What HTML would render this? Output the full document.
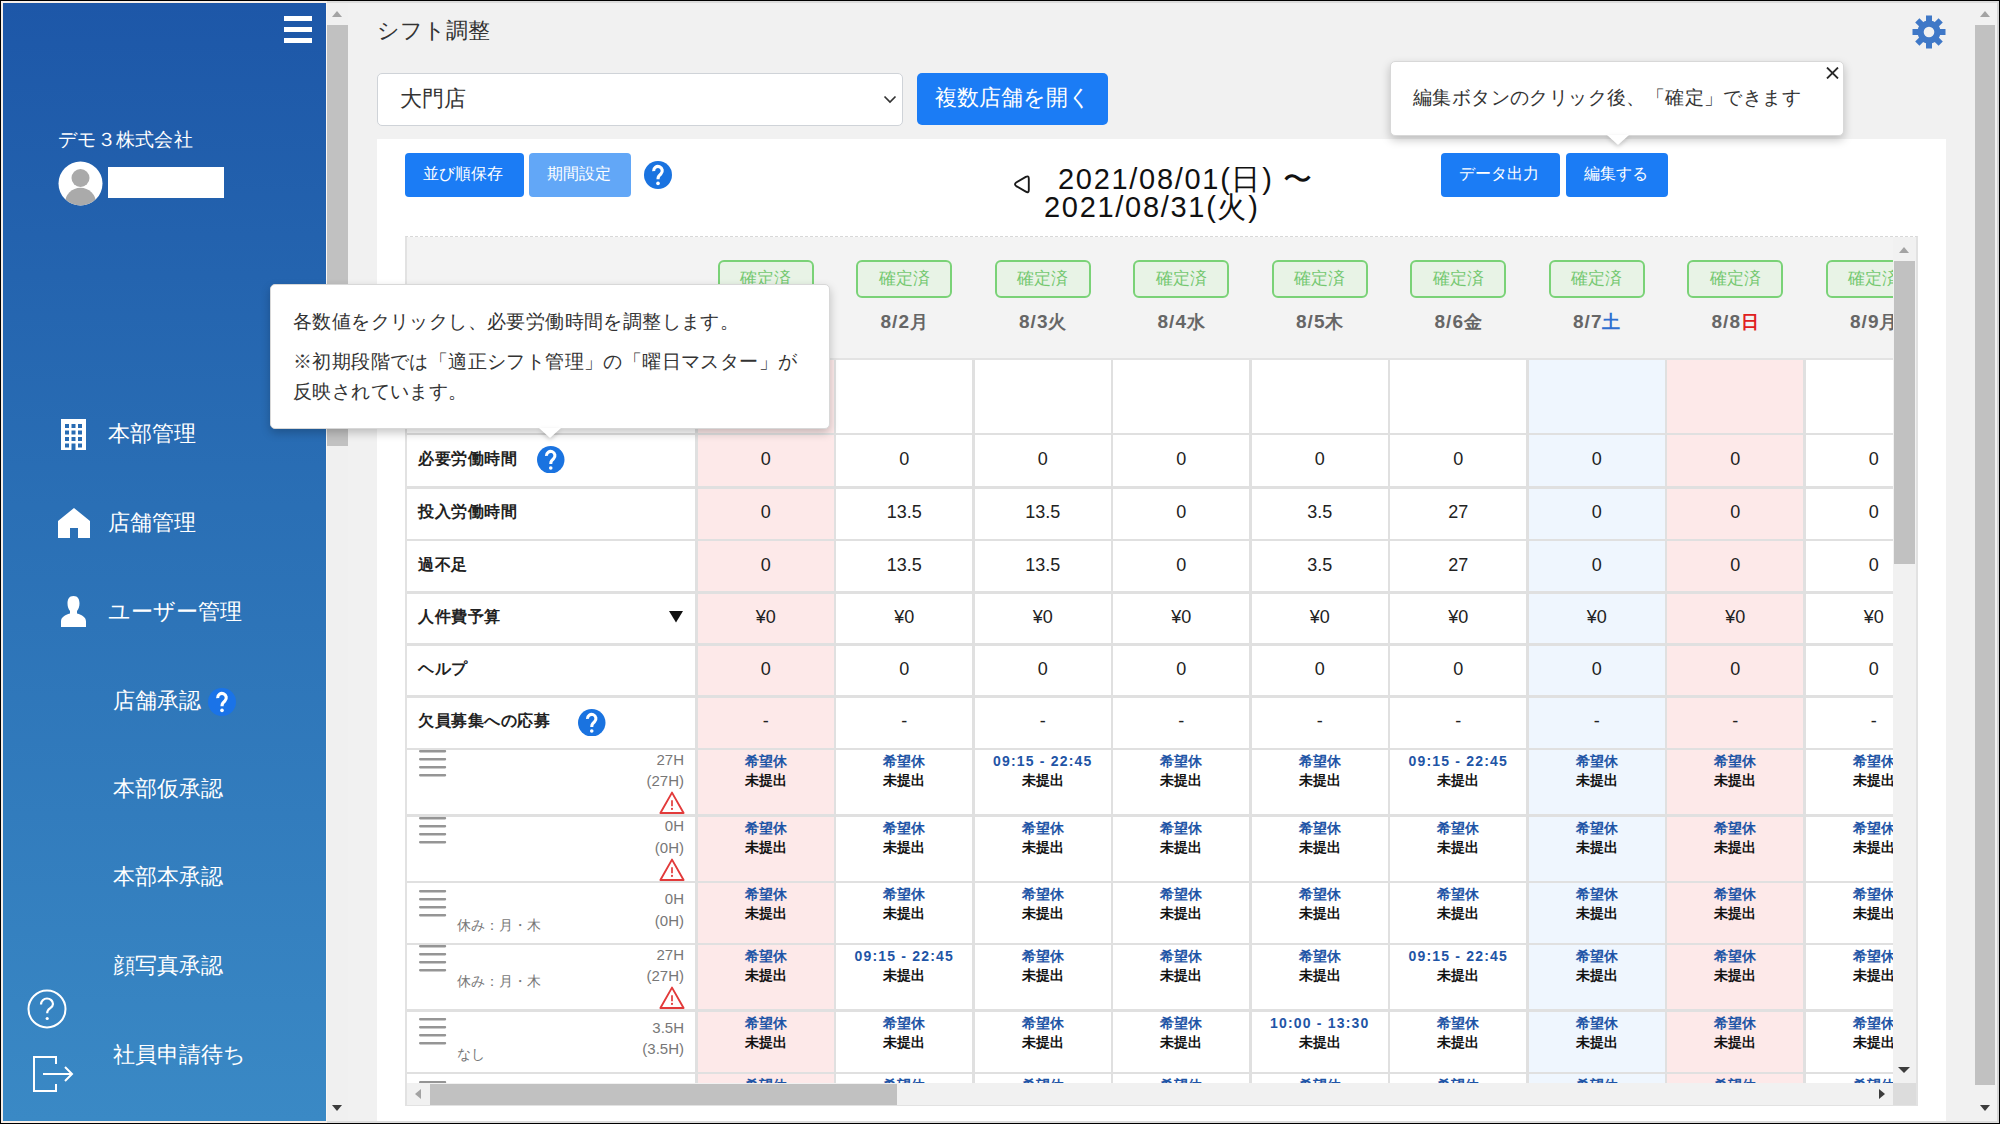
<!DOCTYPE html>
<html><head><meta charset="utf-8"><title>シフト調整</title>
<style>
*{box-sizing:border-box;margin:0;padding:0}
html,body{width:2000px;height:1124px;overflow:hidden}
body{position:relative;background:#000;font-family:"Liberation Sans",sans-serif;color:#222}
.ab{position:absolute}
.t{position:absolute;white-space:nowrap;line-height:1}
</style></head><body>

<div class="ab" style="left:1px;top:1px;width:1998px;height:1122px;background:#f1f1f1;border-top:2px solid #dcdcdc;border-left:2px solid #f6efe9;border-right:2px solid #d6d6d6;border-bottom:2px solid #dcdcdc"></div>
<div class="ab" style="left:1px;top:1px;width:326px;height:2px;background:#f6efe9"></div>
<div class="ab" style="left:1px;top:1121px;width:326px;height:2px;background:#f8efe8"></div>
<div class="ab" style="left:3px;top:3px;width:323px;height:1118px;background:linear-gradient(180deg,#1d57a8 0%,#2a6fb5 45%,#3a89c5 100%)"></div>
<div class="ab" style="left:284px;top:16px;width:28px;height:5px;background:#fff"></div>
<div class="ab" style="left:284px;top:27px;width:28px;height:5px;background:#fff"></div>
<div class="ab" style="left:284px;top:38px;width:28px;height:5px;background:#fff"></div>
<div class="t" style="left:58px;top:130px;font-size:19px;letter-spacing:0.3px;color:#fff">デモ３株式会社</div>
<svg class="ab" style="left:58px;top:161px" width="45" height="45" viewBox="0 0 45 45">
<circle cx="22.5" cy="22.5" r="22" fill="#fff"/>
<clipPath id="avc"><circle cx="22.5" cy="22.5" r="22"/></clipPath>
<g clip-path="url(#avc)" fill="#aaa"><circle cx="22.5" cy="17" r="9"/><ellipse cx="22.5" cy="42.3" rx="15.5" ry="15.5"/></g>
</svg>
<div class="ab" style="left:108px;top:167px;width:116px;height:31px;background:#fff"></div>
<svg class="ab" style="left:61px;top:419px" width="25" height="31" viewBox="0 0 25 31"><path fill="#fff" fill-rule="evenodd" d="M0 0H25V31H0Z M4 5h4v4h-4z M10.5 5h4v4h-4z M17 5h4v4h-4z M4 11.5h4v4h-4z M10.5 11.5h4v4h-4z M17 11.5h4v4h-4z M4 18h4v4h-4z M10.5 18h4v4h-4z M17 18h4v4h-4z M4 24.5h4v4h-4z M17 24.5h4v4h-4z M10.5 24.5h4v6.5h-4z"/></svg>
<div class="t" style="left:108px;top:423px;font-size:22px;color:#fff">本部管理</div>
<svg class="ab" style="left:58px;top:508px" width="32" height="30" viewBox="0 0 32 30"><path fill="#fff" d="M16 0L32 13V30H20V20H12V30H0V13Z"/></svg>
<div class="t" style="left:108px;top:512px;font-size:22px;color:#fff">店舗管理</div>
<svg class="ab" style="left:61px;top:596px" width="25" height="31" viewBox="0 0 25 31"><path fill="#fff" d="M12.5 0C8 0 6.5 3.5 6.5 7.5c0 3 1 5.5 2.5 7.5v2.5C4 19 0 21 0 25.5V31h25v-5.5c0-4.5-4-6.5-9-8V15c1.5-2 2.5-4.5 2.5-7.5C18.5 3.5 17 0 12.5 0z"/></svg>
<div class="t" style="left:108px;top:601px;font-size:22px;color:#fff">ユーザー管理</div>
<div class="t" style="left:113px;top:690px;font-size:22px;color:#fff">店舗承認</div>
<div class="t" style="left:113px;top:778px;font-size:22px;color:#fff">本部仮承認</div>
<div class="t" style="left:113px;top:866px;font-size:22px;color:#fff">本部本承認</div>
<div class="t" style="left:113px;top:955px;font-size:22px;color:#fff">顔写真承認</div>
<div class="t" style="left:113px;top:1044px;font-size:22px;color:#fff">社員申請待ち</div>
<svg class="ab" style="left:208px;top:688px" width="28" height="28" viewBox="0 0 27.6 27.6"><circle cx="13.8" cy="13.8" r="13.8" fill="#1a73e8"/><path d="M9.5 9.9A4.25 4.25 0 1 1 16.7 12.7L14.7 14.8Q13.8 15.9 13.8 18" fill="none" stroke="#fff" stroke-width="3.1"/><circle cx="13.8" cy="22.1" r="1.8" fill="#fff"/></svg>
<svg class="ab" style="left:27px;top:989px" width="40" height="40" viewBox="0 0 40 40"><circle cx="20" cy="20" r="18.5" fill="none" stroke="#fff" stroke-width="2"/><path d="M14 15.5c0-3.5 2.7-6 6-6s6 2.5 6 5.5c0 3.3-3.5 4.3-5 6.3-.6.8-.8 1.7-.8 3" fill="none" stroke="#fff" stroke-width="2.2"/><circle cx="20.2" cy="29.5" r="1.6" fill="#fff"/></svg>
<svg class="ab" style="left:33px;top:1056px" width="41" height="36" viewBox="0 0 41 36"><path d="M23 8V1H1V35H23V28" fill="none" stroke="#fff" stroke-width="2"/><path d="M10 18H39M32 11L39 18L32 25" fill="none" stroke="#fff" stroke-width="2"/></svg>
<div class="ab" style="left:326px;top:3px;width:22px;height:1118px;background:#f0f0f0;border-left:1px solid #fbf7f3"></div>
<div class="ab" style="left:327px;top:25px;width:21px;height:421px;background:#c1c1c1"></div>
<div class="ab" style="left:332px;top:11px;width:0;height:0;border-left:5.5px solid transparent;border-right:5.5px solid transparent;border-bottom:6px solid #a3a3a3"></div>
<div class="ab" style="left:332px;top:1105px;width:0;height:0;border-left:5.5px solid transparent;border-right:5.5px solid transparent;border-top:6px solid #3c3c3c"></div>
<div class="ab" style="left:1975px;top:25px;width:20px;height:1060px;background:#c1c1c1"></div>
<div class="ab" style="left:1980px;top:11px;width:0;height:0;border-left:5.5px solid transparent;border-right:5.5px solid transparent;border-bottom:6px solid #a3a3a3"></div>
<div class="ab" style="left:1980px;top:1105px;width:0;height:0;border-left:5.5px solid transparent;border-right:5.5px solid transparent;border-top:6px solid #3c3c3c"></div>
<div class="t" style="left:377px;top:20px;font-size:22px;color:#333">シフト調整</div>
<svg class="ab" style="left:1912px;top:15px" width="34" height="34" viewBox="-17 -17 34 34"><g fill="#3f78c7">
<rect x="-3" y="-16.5" width="6" height="33" transform="rotate(0)"/><rect x="-3" y="-16.5" width="6" height="33" transform="rotate(45)"/><rect x="-3" y="-16.5" width="6" height="33" transform="rotate(90)"/><rect x="-3" y="-16.5" width="6" height="33" transform="rotate(135)"/>
</g><circle r="11.5" fill="#3f78c7"/><circle r="5.3" fill="#f1f1f1"/></svg>
<div class="ab" style="left:377px;top:73px;width:526px;height:53px;background:#fff;border:1.5px solid #cfd3d8;border-radius:5px"></div>
<div class="t" style="left:400px;top:88px;font-size:22px;color:#333">大門店</div>
<svg class="ab" style="left:883px;top:95px" width="14" height="9" viewBox="0 0 14 9"><path d="M1.5 1.5L7 7L12.5 1.5" fill="none" stroke="#333" stroke-width="1.7"/></svg>
<div class="ab" style="left:917px;top:73px;width:191px;height:52px;background:#1b7cf5;border-radius:5px"></div>
<div class="t" style="left:935px;top:87px;font-size:22px;color:#fff">複数店舗を開く</div>
<div class="ab" style="left:377px;top:139px;width:1569px;height:982px;background:#fff"></div>
<div class="ab" style="left:405px;top:153px;width:119px;height:44px;background:#1b7cf5;border-radius:4px"></div>
<div class="t" style="left:423px;top:166px;font-size:16px;color:#fff">並び順保存</div>
<div class="ab" style="left:529px;top:153px;width:102px;height:44px;background:#62a7f7;border-radius:4px"></div>
<div class="t" style="left:547px;top:166px;font-size:16px;color:#fff">期間設定</div>
<svg class="ab" style="left:644px;top:161px" width="28" height="28" viewBox="0 0 27.6 27.6"><circle cx="13.8" cy="13.8" r="13.8" fill="#1a73e0"/><path d="M9.5 9.9A4.25 4.25 0 1 1 16.7 12.7L14.7 14.8Q13.8 15.9 13.8 18" fill="none" stroke="#fff" stroke-width="3.1"/><circle cx="13.8" cy="22.1" r="1.8" fill="#fff"/></svg>
<svg class="ab" style="left:1013px;top:175px" width="18" height="19" viewBox="0 0 18 19"><path d="M3.2 7.5L12.8 1.9Q15.8 0.2 15.8 3.7V14.9Q15.8 18.4 12.8 16.7L3.2 11.1Q0.8 9.3 3.2 7.5Z" fill="none" stroke="#1a1a1a" stroke-width="1.9" stroke-linejoin="round"/></svg>
<div class="t" style="left:1058px;top:165px;font-size:29px;color:#111;letter-spacing:1.7px">2021/08/01(日) 〜</div>
<div class="t" style="left:1044px;top:193px;font-size:29px;color:#111;letter-spacing:1.7px">2021/08/31(火)</div>
<div class="ab" style="left:1441px;top:153px;width:119px;height:44px;background:#1b7cf5;border-radius:4px"></div>
<div class="t" style="left:1459px;top:166px;font-size:16px;color:#fff">データ出力</div>
<div class="ab" style="left:1566px;top:153px;width:102px;height:44px;background:#1b7cf5;border-radius:4px"></div>
<div class="t" style="left:1584px;top:166px;font-size:16px;color:#fff">編集する</div>
<div class="ab" style="left:405px;top:236px;width:1513px;height:870px;border:2px solid #e2e2e2;border-top:1.5px dashed #d8d8d8;background:#fff"></div>
<div class="ab" style="left:407px;top:237px;width:1486px;height:846px;overflow:hidden">
<div class="ab" style="left:0;top:0;width:1486px;height:123px;background:#f3f3f3;border-bottom:2px solid #e3e3e3"></div>
<div class="ab" style="left:289.5px;top:123px;width:138.5px;height:723px;background:#fde9e9"></div>
<div class="ab" style="left:1120.5px;top:123px;width:138.5px;height:723px;background:#eff6fe"></div>
<div class="ab" style="left:1259px;top:123px;width:138.5px;height:723px;background:#fde9e9"></div>
<div class="ab" style="left:0;top:195.7px;width:1486px;height:2.6px;background:#e0e0e0"></div>
<div class="ab" style="left:0;top:249.2px;width:1486px;height:2.6px;background:#e0e0e0"></div>
<div class="ab" style="left:0;top:301.7px;width:1486px;height:2.6px;background:#e0e0e0"></div>
<div class="ab" style="left:0;top:354.2px;width:1486px;height:2.6px;background:#e0e0e0"></div>
<div class="ab" style="left:0;top:406.2px;width:1486px;height:2.6px;background:#e0e0e0"></div>
<div class="ab" style="left:0;top:458.2px;width:1486px;height:2.6px;background:#e0e0e0"></div>
<div class="ab" style="left:0;top:510.7px;width:1486px;height:2.6px;background:#e0e0e0"></div>
<div class="ab" style="left:0;top:577.2px;width:1486px;height:2.6px;background:#e0e0e0"></div>
<div class="ab" style="left:0;top:643.7px;width:1486px;height:2.6px;background:#e0e0e0"></div>
<div class="ab" style="left:0;top:705.7px;width:1486px;height:2.6px;background:#e0e0e0"></div>
<div class="ab" style="left:0;top:772.2px;width:1486px;height:2.6px;background:#e0e0e0"></div>
<div class="ab" style="left:0;top:834.7px;width:1486px;height:2.6px;background:#e0e0e0"></div>
<div class="ab" style="left:0;top:901.7px;width:1486px;height:2.6px;background:#e0e0e0"></div>
<div class="ab" style="left:288.2px;top:123px;width:2.6px;height:723px;background:#e0e0e0"></div>
<div class="ab" style="left:426.7px;top:123px;width:2.6px;height:723px;background:#e0e0e0"></div>
<div class="ab" style="left:565.2px;top:123px;width:2.6px;height:723px;background:#e0e0e0"></div>
<div class="ab" style="left:703.7px;top:123px;width:2.6px;height:723px;background:#e0e0e0"></div>
<div class="ab" style="left:842.2px;top:123px;width:2.6px;height:723px;background:#e0e0e0"></div>
<div class="ab" style="left:980.7px;top:123px;width:2.6px;height:723px;background:#e0e0e0"></div>
<div class="ab" style="left:1119.2px;top:123px;width:2.6px;height:723px;background:#e0e0e0"></div>
<div class="ab" style="left:1257.7px;top:123px;width:2.6px;height:723px;background:#e0e0e0"></div>
<div class="ab" style="left:1396.2px;top:123px;width:2.6px;height:723px;background:#e0e0e0"></div>
<div class="ab" style="left:310.75px;top:23px;width:96px;height:38px;border:2px solid #7ad277;border-radius:6px;background:#e8f3e6;color:#74c870;font-size:17px;line-height:34px;text-align:center;white-space:nowrap">確定済</div>
<div class="ab" style="left:298.75px;top:74px;width:120px;font-size:19px;line-height:22px;font-weight:bold;color:#666;text-align:center;white-space:nowrap"><span style="letter-spacing:1px">8/1</span><span style="color:#e02020;font-size:18px">日</span></div>
<div class="ab" style="left:449.25px;top:23px;width:96px;height:38px;border:2px solid #7ad277;border-radius:6px;background:#e8f3e6;color:#74c870;font-size:17px;line-height:34px;text-align:center;white-space:nowrap">確定済</div>
<div class="ab" style="left:437.25px;top:74px;width:120px;font-size:19px;line-height:22px;font-weight:bold;color:#666;text-align:center;white-space:nowrap"><span style="letter-spacing:1px">8/2</span><span style="color:#666;font-size:18px">月</span></div>
<div class="ab" style="left:587.75px;top:23px;width:96px;height:38px;border:2px solid #7ad277;border-radius:6px;background:#e8f3e6;color:#74c870;font-size:17px;line-height:34px;text-align:center;white-space:nowrap">確定済</div>
<div class="ab" style="left:575.75px;top:74px;width:120px;font-size:19px;line-height:22px;font-weight:bold;color:#666;text-align:center;white-space:nowrap"><span style="letter-spacing:1px">8/3</span><span style="color:#666;font-size:18px">火</span></div>
<div class="ab" style="left:726.25px;top:23px;width:96px;height:38px;border:2px solid #7ad277;border-radius:6px;background:#e8f3e6;color:#74c870;font-size:17px;line-height:34px;text-align:center;white-space:nowrap">確定済</div>
<div class="ab" style="left:714.25px;top:74px;width:120px;font-size:19px;line-height:22px;font-weight:bold;color:#666;text-align:center;white-space:nowrap"><span style="letter-spacing:1px">8/4</span><span style="color:#666;font-size:18px">水</span></div>
<div class="ab" style="left:864.75px;top:23px;width:96px;height:38px;border:2px solid #7ad277;border-radius:6px;background:#e8f3e6;color:#74c870;font-size:17px;line-height:34px;text-align:center;white-space:nowrap">確定済</div>
<div class="ab" style="left:852.75px;top:74px;width:120px;font-size:19px;line-height:22px;font-weight:bold;color:#666;text-align:center;white-space:nowrap"><span style="letter-spacing:1px">8/5</span><span style="color:#666;font-size:18px">木</span></div>
<div class="ab" style="left:1003.25px;top:23px;width:96px;height:38px;border:2px solid #7ad277;border-radius:6px;background:#e8f3e6;color:#74c870;font-size:17px;line-height:34px;text-align:center;white-space:nowrap">確定済</div>
<div class="ab" style="left:991.25px;top:74px;width:120px;font-size:19px;line-height:22px;font-weight:bold;color:#666;text-align:center;white-space:nowrap"><span style="letter-spacing:1px">8/6</span><span style="color:#666;font-size:18px">金</span></div>
<div class="ab" style="left:1141.75px;top:23px;width:96px;height:38px;border:2px solid #7ad277;border-radius:6px;background:#e8f3e6;color:#74c870;font-size:17px;line-height:34px;text-align:center;white-space:nowrap">確定済</div>
<div class="ab" style="left:1129.75px;top:74px;width:120px;font-size:19px;line-height:22px;font-weight:bold;color:#666;text-align:center;white-space:nowrap"><span style="letter-spacing:1px">8/7</span><span style="color:#2f6fd0;font-size:18px">土</span></div>
<div class="ab" style="left:1280.25px;top:23px;width:96px;height:38px;border:2px solid #7ad277;border-radius:6px;background:#e8f3e6;color:#74c870;font-size:17px;line-height:34px;text-align:center;white-space:nowrap">確定済</div>
<div class="ab" style="left:1268.25px;top:74px;width:120px;font-size:19px;line-height:22px;font-weight:bold;color:#666;text-align:center;white-space:nowrap"><span style="letter-spacing:1px">8/8</span><span style="color:#e02020;font-size:18px">日</span></div>
<div class="ab" style="left:1418.75px;top:23px;width:96px;height:38px;border:2px solid #7ad277;border-radius:6px;background:#e8f3e6;color:#74c870;font-size:17px;line-height:34px;text-align:center;white-space:nowrap">確定済</div>
<div class="ab" style="left:1406.75px;top:74px;width:120px;font-size:19px;line-height:22px;font-weight:bold;color:#666;text-align:center;white-space:nowrap"><span style="letter-spacing:1px">8/9</span><span style="color:#666;font-size:18px">月</span></div>
<div class="t" style="left:11px;top:213.25px;font-size:16px;line-height:18px;font-weight:bold;letter-spacing:0.5px;color:#222">必要労働時間</div>
<div class="ab" style="left:298.75px;top:212.25px;width:120px;font-size:18px;line-height:20px;color:#222;text-align:center;white-space:nowrap">0</div>
<div class="ab" style="left:437.25px;top:212.25px;width:120px;font-size:18px;line-height:20px;color:#222;text-align:center;white-space:nowrap">0</div>
<div class="ab" style="left:575.75px;top:212.25px;width:120px;font-size:18px;line-height:20px;color:#222;text-align:center;white-space:nowrap">0</div>
<div class="ab" style="left:714.25px;top:212.25px;width:120px;font-size:18px;line-height:20px;color:#222;text-align:center;white-space:nowrap">0</div>
<div class="ab" style="left:852.75px;top:212.25px;width:120px;font-size:18px;line-height:20px;color:#222;text-align:center;white-space:nowrap">0</div>
<div class="ab" style="left:991.25px;top:212.25px;width:120px;font-size:18px;line-height:20px;color:#222;text-align:center;white-space:nowrap">0</div>
<div class="ab" style="left:1129.75px;top:212.25px;width:120px;font-size:18px;line-height:20px;color:#222;text-align:center;white-space:nowrap">0</div>
<div class="ab" style="left:1268.25px;top:212.25px;width:120px;font-size:18px;line-height:20px;color:#222;text-align:center;white-space:nowrap">0</div>
<div class="ab" style="left:1406.75px;top:212.25px;width:120px;font-size:18px;line-height:20px;color:#222;text-align:center;white-space:nowrap">0</div>
<div class="t" style="left:11px;top:266.25px;font-size:16px;line-height:18px;font-weight:bold;letter-spacing:0.5px;color:#222">投入労働時間</div>
<div class="ab" style="left:298.75px;top:265.25px;width:120px;font-size:18px;line-height:20px;color:#222;text-align:center;white-space:nowrap">0</div>
<div class="ab" style="left:437.25px;top:265.25px;width:120px;font-size:18px;line-height:20px;color:#222;text-align:center;white-space:nowrap">13.5</div>
<div class="ab" style="left:575.75px;top:265.25px;width:120px;font-size:18px;line-height:20px;color:#222;text-align:center;white-space:nowrap">13.5</div>
<div class="ab" style="left:714.25px;top:265.25px;width:120px;font-size:18px;line-height:20px;color:#222;text-align:center;white-space:nowrap">0</div>
<div class="ab" style="left:852.75px;top:265.25px;width:120px;font-size:18px;line-height:20px;color:#222;text-align:center;white-space:nowrap">3.5</div>
<div class="ab" style="left:991.25px;top:265.25px;width:120px;font-size:18px;line-height:20px;color:#222;text-align:center;white-space:nowrap">27</div>
<div class="ab" style="left:1129.75px;top:265.25px;width:120px;font-size:18px;line-height:20px;color:#222;text-align:center;white-space:nowrap">0</div>
<div class="ab" style="left:1268.25px;top:265.25px;width:120px;font-size:18px;line-height:20px;color:#222;text-align:center;white-space:nowrap">0</div>
<div class="ab" style="left:1406.75px;top:265.25px;width:120px;font-size:18px;line-height:20px;color:#222;text-align:center;white-space:nowrap">0</div>
<div class="t" style="left:11px;top:318.75px;font-size:16px;line-height:18px;font-weight:bold;letter-spacing:0.5px;color:#222">過不足</div>
<div class="ab" style="left:298.75px;top:317.75px;width:120px;font-size:18px;line-height:20px;color:#222;text-align:center;white-space:nowrap">0</div>
<div class="ab" style="left:437.25px;top:317.75px;width:120px;font-size:18px;line-height:20px;color:#222;text-align:center;white-space:nowrap">13.5</div>
<div class="ab" style="left:575.75px;top:317.75px;width:120px;font-size:18px;line-height:20px;color:#222;text-align:center;white-space:nowrap">13.5</div>
<div class="ab" style="left:714.25px;top:317.75px;width:120px;font-size:18px;line-height:20px;color:#222;text-align:center;white-space:nowrap">0</div>
<div class="ab" style="left:852.75px;top:317.75px;width:120px;font-size:18px;line-height:20px;color:#222;text-align:center;white-space:nowrap">3.5</div>
<div class="ab" style="left:991.25px;top:317.75px;width:120px;font-size:18px;line-height:20px;color:#222;text-align:center;white-space:nowrap">27</div>
<div class="ab" style="left:1129.75px;top:317.75px;width:120px;font-size:18px;line-height:20px;color:#222;text-align:center;white-space:nowrap">0</div>
<div class="ab" style="left:1268.25px;top:317.75px;width:120px;font-size:18px;line-height:20px;color:#222;text-align:center;white-space:nowrap">0</div>
<div class="ab" style="left:1406.75px;top:317.75px;width:120px;font-size:18px;line-height:20px;color:#222;text-align:center;white-space:nowrap">0</div>
<div class="t" style="left:11px;top:371.0px;font-size:16px;line-height:18px;font-weight:bold;letter-spacing:0.5px;color:#222">人件費予算</div>
<div class="ab" style="left:298.75px;top:370.0px;width:120px;font-size:18px;line-height:20px;color:#222;text-align:center;white-space:nowrap">¥0</div>
<div class="ab" style="left:437.25px;top:370.0px;width:120px;font-size:18px;line-height:20px;color:#222;text-align:center;white-space:nowrap">¥0</div>
<div class="ab" style="left:575.75px;top:370.0px;width:120px;font-size:18px;line-height:20px;color:#222;text-align:center;white-space:nowrap">¥0</div>
<div class="ab" style="left:714.25px;top:370.0px;width:120px;font-size:18px;line-height:20px;color:#222;text-align:center;white-space:nowrap">¥0</div>
<div class="ab" style="left:852.75px;top:370.0px;width:120px;font-size:18px;line-height:20px;color:#222;text-align:center;white-space:nowrap">¥0</div>
<div class="ab" style="left:991.25px;top:370.0px;width:120px;font-size:18px;line-height:20px;color:#222;text-align:center;white-space:nowrap">¥0</div>
<div class="ab" style="left:1129.75px;top:370.0px;width:120px;font-size:18px;line-height:20px;color:#222;text-align:center;white-space:nowrap">¥0</div>
<div class="ab" style="left:1268.25px;top:370.0px;width:120px;font-size:18px;line-height:20px;color:#222;text-align:center;white-space:nowrap">¥0</div>
<div class="ab" style="left:1406.75px;top:370.0px;width:120px;font-size:18px;line-height:20px;color:#222;text-align:center;white-space:nowrap">¥0</div>
<div class="t" style="left:11px;top:423.0px;font-size:16px;line-height:18px;font-weight:bold;letter-spacing:0.5px;color:#222">ヘルプ</div>
<div class="ab" style="left:298.75px;top:422.0px;width:120px;font-size:18px;line-height:20px;color:#222;text-align:center;white-space:nowrap">0</div>
<div class="ab" style="left:437.25px;top:422.0px;width:120px;font-size:18px;line-height:20px;color:#222;text-align:center;white-space:nowrap">0</div>
<div class="ab" style="left:575.75px;top:422.0px;width:120px;font-size:18px;line-height:20px;color:#222;text-align:center;white-space:nowrap">0</div>
<div class="ab" style="left:714.25px;top:422.0px;width:120px;font-size:18px;line-height:20px;color:#222;text-align:center;white-space:nowrap">0</div>
<div class="ab" style="left:852.75px;top:422.0px;width:120px;font-size:18px;line-height:20px;color:#222;text-align:center;white-space:nowrap">0</div>
<div class="ab" style="left:991.25px;top:422.0px;width:120px;font-size:18px;line-height:20px;color:#222;text-align:center;white-space:nowrap">0</div>
<div class="ab" style="left:1129.75px;top:422.0px;width:120px;font-size:18px;line-height:20px;color:#222;text-align:center;white-space:nowrap">0</div>
<div class="ab" style="left:1268.25px;top:422.0px;width:120px;font-size:18px;line-height:20px;color:#222;text-align:center;white-space:nowrap">0</div>
<div class="ab" style="left:1406.75px;top:422.0px;width:120px;font-size:18px;line-height:20px;color:#222;text-align:center;white-space:nowrap">0</div>
<div class="t" style="left:11px;top:475.25px;font-size:16px;line-height:18px;font-weight:bold;letter-spacing:0.5px;color:#222">欠員募集への応募</div>
<div class="ab" style="left:298.75px;top:474.25px;width:120px;font-size:18px;line-height:20px;color:#222;text-align:center;white-space:nowrap">-</div>
<div class="ab" style="left:437.25px;top:474.25px;width:120px;font-size:18px;line-height:20px;color:#222;text-align:center;white-space:nowrap">-</div>
<div class="ab" style="left:575.75px;top:474.25px;width:120px;font-size:18px;line-height:20px;color:#222;text-align:center;white-space:nowrap">-</div>
<div class="ab" style="left:714.25px;top:474.25px;width:120px;font-size:18px;line-height:20px;color:#222;text-align:center;white-space:nowrap">-</div>
<div class="ab" style="left:852.75px;top:474.25px;width:120px;font-size:18px;line-height:20px;color:#222;text-align:center;white-space:nowrap">-</div>
<div class="ab" style="left:991.25px;top:474.25px;width:120px;font-size:18px;line-height:20px;color:#222;text-align:center;white-space:nowrap">-</div>
<div class="ab" style="left:1129.75px;top:474.25px;width:120px;font-size:18px;line-height:20px;color:#222;text-align:center;white-space:nowrap">-</div>
<div class="ab" style="left:1268.25px;top:474.25px;width:120px;font-size:18px;line-height:20px;color:#222;text-align:center;white-space:nowrap">-</div>
<div class="ab" style="left:1406.75px;top:474.25px;width:120px;font-size:18px;line-height:20px;color:#222;text-align:center;white-space:nowrap">-</div>
<svg class="ab" style="left:130px;top:208.5px" width="27.5" height="27.5" viewBox="0 0 27.6 27.6"><circle cx="13.8" cy="13.8" r="13.8" fill="#1a73e0"/><path d="M9.5 9.9A4.25 4.25 0 1 1 16.7 12.7L14.7 14.8Q13.8 15.9 13.8 18" fill="none" stroke="#fff" stroke-width="3.1"/><circle cx="13.8" cy="22.1" r="1.8" fill="#fff"/></svg>
<svg class="ab" style="left:171px;top:471.5px" width="27.5" height="27.5" viewBox="0 0 27.6 27.6"><circle cx="13.8" cy="13.8" r="13.8" fill="#1a73e0"/><path d="M9.5 9.9A4.25 4.25 0 1 1 16.7 12.7L14.7 14.8Q13.8 15.9 13.8 18" fill="none" stroke="#fff" stroke-width="3.1"/><circle cx="13.8" cy="22.1" r="1.8" fill="#fff"/></svg>
<svg class="ab" style="left:262px;top:374px" width="14" height="12" viewBox="0 0 14 12"><path d="M0 0H14L7 11.5Z" fill="#111"/></svg>
<svg class="ab" style="left:11px;top:512px" width="30" height="32" viewBox="0 0 30 32"><rect x="1" y="1.1" width="27.2" height="2.3" rx="1.1" fill="#959595"/><rect x="1" y="9.1" width="27.2" height="2.3" rx="1.1" fill="#959595"/><rect x="1" y="17.1" width="27.2" height="2.3" rx="1.1" fill="#959595"/><rect x="1" y="25.1" width="27.2" height="2.3" rx="1.1" fill="#959595"/></svg>
<div class="ab" style="left:153px;top:512.6px;width:124px;font-size:15px;line-height:20px;color:#777;text-align:right">27H</div>
<div class="ab" style="left:153px;top:534px;width:124px;font-size:15px;line-height:20px;color:#777;text-align:right">(27H)</div>
<svg class="ab" style="left:252px;top:554px" width="26" height="24" viewBox="0 0 26 24"><path d="M13 1.6L24.6 22H1.4Z" fill="none" stroke="#e23a3a" stroke-width="1.9" stroke-linejoin="round"/><path d="M13 9.2V15.2" stroke="#e23a3a" stroke-width="1.7"/><circle cx="13" cy="17.9" r="1.05" fill="#e23a3a"/></svg>
<div class="ab" style="left:288.75px;top:515.2px;width:140px;font-size:14px;line-height:18px;font-weight:bold;color:#1f55a6;text-align:center;white-space:nowrap;">希望休</div>
<div class="ab" style="left:288.75px;top:534px;width:140px;font-size:14px;line-height:18px;font-weight:bold;color:#111;text-align:center;white-space:nowrap">未提出</div>
<div class="ab" style="left:427.25px;top:515.2px;width:140px;font-size:14px;line-height:18px;font-weight:bold;color:#1f55a6;text-align:center;white-space:nowrap;">希望休</div>
<div class="ab" style="left:427.25px;top:534px;width:140px;font-size:14px;line-height:18px;font-weight:bold;color:#111;text-align:center;white-space:nowrap">未提出</div>
<div class="ab" style="left:565.75px;top:515.2px;width:140px;font-size:14px;line-height:18px;font-weight:bold;color:#1f55a6;text-align:center;white-space:nowrap;letter-spacing:1.2px;font-size:14px;">09:15 - 22:45</div>
<div class="ab" style="left:565.75px;top:534px;width:140px;font-size:14px;line-height:18px;font-weight:bold;color:#111;text-align:center;white-space:nowrap">未提出</div>
<div class="ab" style="left:704.25px;top:515.2px;width:140px;font-size:14px;line-height:18px;font-weight:bold;color:#1f55a6;text-align:center;white-space:nowrap;">希望休</div>
<div class="ab" style="left:704.25px;top:534px;width:140px;font-size:14px;line-height:18px;font-weight:bold;color:#111;text-align:center;white-space:nowrap">未提出</div>
<div class="ab" style="left:842.75px;top:515.2px;width:140px;font-size:14px;line-height:18px;font-weight:bold;color:#1f55a6;text-align:center;white-space:nowrap;">希望休</div>
<div class="ab" style="left:842.75px;top:534px;width:140px;font-size:14px;line-height:18px;font-weight:bold;color:#111;text-align:center;white-space:nowrap">未提出</div>
<div class="ab" style="left:981.25px;top:515.2px;width:140px;font-size:14px;line-height:18px;font-weight:bold;color:#1f55a6;text-align:center;white-space:nowrap;letter-spacing:1.2px;font-size:14px;">09:15 - 22:45</div>
<div class="ab" style="left:981.25px;top:534px;width:140px;font-size:14px;line-height:18px;font-weight:bold;color:#111;text-align:center;white-space:nowrap">未提出</div>
<div class="ab" style="left:1119.75px;top:515.2px;width:140px;font-size:14px;line-height:18px;font-weight:bold;color:#1f55a6;text-align:center;white-space:nowrap;">希望休</div>
<div class="ab" style="left:1119.75px;top:534px;width:140px;font-size:14px;line-height:18px;font-weight:bold;color:#111;text-align:center;white-space:nowrap">未提出</div>
<div class="ab" style="left:1258.25px;top:515.2px;width:140px;font-size:14px;line-height:18px;font-weight:bold;color:#1f55a6;text-align:center;white-space:nowrap;">希望休</div>
<div class="ab" style="left:1258.25px;top:534px;width:140px;font-size:14px;line-height:18px;font-weight:bold;color:#111;text-align:center;white-space:nowrap">未提出</div>
<div class="ab" style="left:1396.75px;top:515.2px;width:140px;font-size:14px;line-height:18px;font-weight:bold;color:#1f55a6;text-align:center;white-space:nowrap;">希望休</div>
<div class="ab" style="left:1396.75px;top:534px;width:140px;font-size:14px;line-height:18px;font-weight:bold;color:#111;text-align:center;white-space:nowrap">未提出</div>
<svg class="ab" style="left:11px;top:578.5px" width="30" height="32" viewBox="0 0 30 32"><rect x="1" y="1.1" width="27.2" height="2.3" rx="1.1" fill="#959595"/><rect x="1" y="9.1" width="27.2" height="2.3" rx="1.1" fill="#959595"/><rect x="1" y="17.1" width="27.2" height="2.3" rx="1.1" fill="#959595"/><rect x="1" y="25.1" width="27.2" height="2.3" rx="1.1" fill="#959595"/></svg>
<div class="ab" style="left:153px;top:579.1px;width:124px;font-size:15px;line-height:20px;color:#777;text-align:right">0H</div>
<div class="ab" style="left:153px;top:600.5px;width:124px;font-size:15px;line-height:20px;color:#777;text-align:right">(0H)</div>
<svg class="ab" style="left:252px;top:620.5px" width="26" height="24" viewBox="0 0 26 24"><path d="M13 1.6L24.6 22H1.4Z" fill="none" stroke="#e23a3a" stroke-width="1.9" stroke-linejoin="round"/><path d="M13 9.2V15.2" stroke="#e23a3a" stroke-width="1.7"/><circle cx="13" cy="17.9" r="1.05" fill="#e23a3a"/></svg>
<div class="ab" style="left:288.75px;top:581.7px;width:140px;font-size:14px;line-height:18px;font-weight:bold;color:#1f55a6;text-align:center;white-space:nowrap;">希望休</div>
<div class="ab" style="left:288.75px;top:600.5px;width:140px;font-size:14px;line-height:18px;font-weight:bold;color:#111;text-align:center;white-space:nowrap">未提出</div>
<div class="ab" style="left:427.25px;top:581.7px;width:140px;font-size:14px;line-height:18px;font-weight:bold;color:#1f55a6;text-align:center;white-space:nowrap;">希望休</div>
<div class="ab" style="left:427.25px;top:600.5px;width:140px;font-size:14px;line-height:18px;font-weight:bold;color:#111;text-align:center;white-space:nowrap">未提出</div>
<div class="ab" style="left:565.75px;top:581.7px;width:140px;font-size:14px;line-height:18px;font-weight:bold;color:#1f55a6;text-align:center;white-space:nowrap;">希望休</div>
<div class="ab" style="left:565.75px;top:600.5px;width:140px;font-size:14px;line-height:18px;font-weight:bold;color:#111;text-align:center;white-space:nowrap">未提出</div>
<div class="ab" style="left:704.25px;top:581.7px;width:140px;font-size:14px;line-height:18px;font-weight:bold;color:#1f55a6;text-align:center;white-space:nowrap;">希望休</div>
<div class="ab" style="left:704.25px;top:600.5px;width:140px;font-size:14px;line-height:18px;font-weight:bold;color:#111;text-align:center;white-space:nowrap">未提出</div>
<div class="ab" style="left:842.75px;top:581.7px;width:140px;font-size:14px;line-height:18px;font-weight:bold;color:#1f55a6;text-align:center;white-space:nowrap;">希望休</div>
<div class="ab" style="left:842.75px;top:600.5px;width:140px;font-size:14px;line-height:18px;font-weight:bold;color:#111;text-align:center;white-space:nowrap">未提出</div>
<div class="ab" style="left:981.25px;top:581.7px;width:140px;font-size:14px;line-height:18px;font-weight:bold;color:#1f55a6;text-align:center;white-space:nowrap;">希望休</div>
<div class="ab" style="left:981.25px;top:600.5px;width:140px;font-size:14px;line-height:18px;font-weight:bold;color:#111;text-align:center;white-space:nowrap">未提出</div>
<div class="ab" style="left:1119.75px;top:581.7px;width:140px;font-size:14px;line-height:18px;font-weight:bold;color:#1f55a6;text-align:center;white-space:nowrap;">希望休</div>
<div class="ab" style="left:1119.75px;top:600.5px;width:140px;font-size:14px;line-height:18px;font-weight:bold;color:#111;text-align:center;white-space:nowrap">未提出</div>
<div class="ab" style="left:1258.25px;top:581.7px;width:140px;font-size:14px;line-height:18px;font-weight:bold;color:#1f55a6;text-align:center;white-space:nowrap;">希望休</div>
<div class="ab" style="left:1258.25px;top:600.5px;width:140px;font-size:14px;line-height:18px;font-weight:bold;color:#111;text-align:center;white-space:nowrap">未提出</div>
<div class="ab" style="left:1396.75px;top:581.7px;width:140px;font-size:14px;line-height:18px;font-weight:bold;color:#1f55a6;text-align:center;white-space:nowrap;">希望休</div>
<div class="ab" style="left:1396.75px;top:600.5px;width:140px;font-size:14px;line-height:18px;font-weight:bold;color:#111;text-align:center;white-space:nowrap">未提出</div>
<svg class="ab" style="left:11px;top:651.5px" width="30" height="32" viewBox="0 0 30 32"><rect x="1" y="1.1" width="27.2" height="2.3" rx="1.1" fill="#959595"/><rect x="1" y="9.1" width="27.2" height="2.3" rx="1.1" fill="#959595"/><rect x="1" y="17.1" width="27.2" height="2.3" rx="1.1" fill="#959595"/><rect x="1" y="25.1" width="27.2" height="2.3" rx="1.1" fill="#959595"/></svg>
<div class="ab" style="left:153px;top:652.1px;width:124px;font-size:15px;line-height:20px;color:#777;text-align:right">0H</div>
<div class="ab" style="left:153px;top:673.5px;width:124px;font-size:15px;line-height:20px;color:#777;text-align:right">(0H)</div>
<div class="t" style="left:50px;top:679px;font-size:14px;line-height:18px;color:#777">休み：月・木</div>
<div class="ab" style="left:288.75px;top:648.2px;width:140px;font-size:14px;line-height:18px;font-weight:bold;color:#1f55a6;text-align:center;white-space:nowrap;">希望休</div>
<div class="ab" style="left:288.75px;top:667px;width:140px;font-size:14px;line-height:18px;font-weight:bold;color:#111;text-align:center;white-space:nowrap">未提出</div>
<div class="ab" style="left:427.25px;top:648.2px;width:140px;font-size:14px;line-height:18px;font-weight:bold;color:#1f55a6;text-align:center;white-space:nowrap;">希望休</div>
<div class="ab" style="left:427.25px;top:667px;width:140px;font-size:14px;line-height:18px;font-weight:bold;color:#111;text-align:center;white-space:nowrap">未提出</div>
<div class="ab" style="left:565.75px;top:648.2px;width:140px;font-size:14px;line-height:18px;font-weight:bold;color:#1f55a6;text-align:center;white-space:nowrap;">希望休</div>
<div class="ab" style="left:565.75px;top:667px;width:140px;font-size:14px;line-height:18px;font-weight:bold;color:#111;text-align:center;white-space:nowrap">未提出</div>
<div class="ab" style="left:704.25px;top:648.2px;width:140px;font-size:14px;line-height:18px;font-weight:bold;color:#1f55a6;text-align:center;white-space:nowrap;">希望休</div>
<div class="ab" style="left:704.25px;top:667px;width:140px;font-size:14px;line-height:18px;font-weight:bold;color:#111;text-align:center;white-space:nowrap">未提出</div>
<div class="ab" style="left:842.75px;top:648.2px;width:140px;font-size:14px;line-height:18px;font-weight:bold;color:#1f55a6;text-align:center;white-space:nowrap;">希望休</div>
<div class="ab" style="left:842.75px;top:667px;width:140px;font-size:14px;line-height:18px;font-weight:bold;color:#111;text-align:center;white-space:nowrap">未提出</div>
<div class="ab" style="left:981.25px;top:648.2px;width:140px;font-size:14px;line-height:18px;font-weight:bold;color:#1f55a6;text-align:center;white-space:nowrap;">希望休</div>
<div class="ab" style="left:981.25px;top:667px;width:140px;font-size:14px;line-height:18px;font-weight:bold;color:#111;text-align:center;white-space:nowrap">未提出</div>
<div class="ab" style="left:1119.75px;top:648.2px;width:140px;font-size:14px;line-height:18px;font-weight:bold;color:#1f55a6;text-align:center;white-space:nowrap;">希望休</div>
<div class="ab" style="left:1119.75px;top:667px;width:140px;font-size:14px;line-height:18px;font-weight:bold;color:#111;text-align:center;white-space:nowrap">未提出</div>
<div class="ab" style="left:1258.25px;top:648.2px;width:140px;font-size:14px;line-height:18px;font-weight:bold;color:#1f55a6;text-align:center;white-space:nowrap;">希望休</div>
<div class="ab" style="left:1258.25px;top:667px;width:140px;font-size:14px;line-height:18px;font-weight:bold;color:#111;text-align:center;white-space:nowrap">未提出</div>
<div class="ab" style="left:1396.75px;top:648.2px;width:140px;font-size:14px;line-height:18px;font-weight:bold;color:#1f55a6;text-align:center;white-space:nowrap;">希望休</div>
<div class="ab" style="left:1396.75px;top:667px;width:140px;font-size:14px;line-height:18px;font-weight:bold;color:#111;text-align:center;white-space:nowrap">未提出</div>
<svg class="ab" style="left:11px;top:707px" width="30" height="32" viewBox="0 0 30 32"><rect x="1" y="1.1" width="27.2" height="2.3" rx="1.1" fill="#959595"/><rect x="1" y="9.1" width="27.2" height="2.3" rx="1.1" fill="#959595"/><rect x="1" y="17.1" width="27.2" height="2.3" rx="1.1" fill="#959595"/><rect x="1" y="25.1" width="27.2" height="2.3" rx="1.1" fill="#959595"/></svg>
<div class="ab" style="left:153px;top:707.6px;width:124px;font-size:15px;line-height:20px;color:#777;text-align:right">27H</div>
<div class="ab" style="left:153px;top:729px;width:124px;font-size:15px;line-height:20px;color:#777;text-align:right">(27H)</div>
<svg class="ab" style="left:252px;top:749px" width="26" height="24" viewBox="0 0 26 24"><path d="M13 1.6L24.6 22H1.4Z" fill="none" stroke="#e23a3a" stroke-width="1.9" stroke-linejoin="round"/><path d="M13 9.2V15.2" stroke="#e23a3a" stroke-width="1.7"/><circle cx="13" cy="17.9" r="1.05" fill="#e23a3a"/></svg>
<div class="t" style="left:50px;top:735px;font-size:14px;line-height:18px;color:#777">休み：月・木</div>
<div class="ab" style="left:288.75px;top:710.2px;width:140px;font-size:14px;line-height:18px;font-weight:bold;color:#1f55a6;text-align:center;white-space:nowrap;">希望休</div>
<div class="ab" style="left:288.75px;top:729px;width:140px;font-size:14px;line-height:18px;font-weight:bold;color:#111;text-align:center;white-space:nowrap">未提出</div>
<div class="ab" style="left:427.25px;top:710.2px;width:140px;font-size:14px;line-height:18px;font-weight:bold;color:#1f55a6;text-align:center;white-space:nowrap;letter-spacing:1.2px;font-size:14px;">09:15 - 22:45</div>
<div class="ab" style="left:427.25px;top:729px;width:140px;font-size:14px;line-height:18px;font-weight:bold;color:#111;text-align:center;white-space:nowrap">未提出</div>
<div class="ab" style="left:565.75px;top:710.2px;width:140px;font-size:14px;line-height:18px;font-weight:bold;color:#1f55a6;text-align:center;white-space:nowrap;">希望休</div>
<div class="ab" style="left:565.75px;top:729px;width:140px;font-size:14px;line-height:18px;font-weight:bold;color:#111;text-align:center;white-space:nowrap">未提出</div>
<div class="ab" style="left:704.25px;top:710.2px;width:140px;font-size:14px;line-height:18px;font-weight:bold;color:#1f55a6;text-align:center;white-space:nowrap;">希望休</div>
<div class="ab" style="left:704.25px;top:729px;width:140px;font-size:14px;line-height:18px;font-weight:bold;color:#111;text-align:center;white-space:nowrap">未提出</div>
<div class="ab" style="left:842.75px;top:710.2px;width:140px;font-size:14px;line-height:18px;font-weight:bold;color:#1f55a6;text-align:center;white-space:nowrap;">希望休</div>
<div class="ab" style="left:842.75px;top:729px;width:140px;font-size:14px;line-height:18px;font-weight:bold;color:#111;text-align:center;white-space:nowrap">未提出</div>
<div class="ab" style="left:981.25px;top:710.2px;width:140px;font-size:14px;line-height:18px;font-weight:bold;color:#1f55a6;text-align:center;white-space:nowrap;letter-spacing:1.2px;font-size:14px;">09:15 - 22:45</div>
<div class="ab" style="left:981.25px;top:729px;width:140px;font-size:14px;line-height:18px;font-weight:bold;color:#111;text-align:center;white-space:nowrap">未提出</div>
<div class="ab" style="left:1119.75px;top:710.2px;width:140px;font-size:14px;line-height:18px;font-weight:bold;color:#1f55a6;text-align:center;white-space:nowrap;">希望休</div>
<div class="ab" style="left:1119.75px;top:729px;width:140px;font-size:14px;line-height:18px;font-weight:bold;color:#111;text-align:center;white-space:nowrap">未提出</div>
<div class="ab" style="left:1258.25px;top:710.2px;width:140px;font-size:14px;line-height:18px;font-weight:bold;color:#1f55a6;text-align:center;white-space:nowrap;">希望休</div>
<div class="ab" style="left:1258.25px;top:729px;width:140px;font-size:14px;line-height:18px;font-weight:bold;color:#111;text-align:center;white-space:nowrap">未提出</div>
<div class="ab" style="left:1396.75px;top:710.2px;width:140px;font-size:14px;line-height:18px;font-weight:bold;color:#1f55a6;text-align:center;white-space:nowrap;">希望休</div>
<div class="ab" style="left:1396.75px;top:729px;width:140px;font-size:14px;line-height:18px;font-weight:bold;color:#111;text-align:center;white-space:nowrap">未提出</div>
<svg class="ab" style="left:11px;top:780.0px" width="30" height="32" viewBox="0 0 30 32"><rect x="1" y="1.1" width="27.2" height="2.3" rx="1.1" fill="#959595"/><rect x="1" y="9.1" width="27.2" height="2.3" rx="1.1" fill="#959595"/><rect x="1" y="17.1" width="27.2" height="2.3" rx="1.1" fill="#959595"/><rect x="1" y="25.1" width="27.2" height="2.3" rx="1.1" fill="#959595"/></svg>
<div class="ab" style="left:153px;top:780.6px;width:124px;font-size:15px;line-height:20px;color:#777;text-align:right">3.5H</div>
<div class="ab" style="left:153px;top:802.0px;width:124px;font-size:15px;line-height:20px;color:#777;text-align:right">(3.5H)</div>
<div class="t" style="left:50px;top:807.5px;font-size:14px;line-height:18px;color:#777">なし</div>
<div class="ab" style="left:288.75px;top:776.7px;width:140px;font-size:14px;line-height:18px;font-weight:bold;color:#1f55a6;text-align:center;white-space:nowrap;">希望休</div>
<div class="ab" style="left:288.75px;top:795.5px;width:140px;font-size:14px;line-height:18px;font-weight:bold;color:#111;text-align:center;white-space:nowrap">未提出</div>
<div class="ab" style="left:427.25px;top:776.7px;width:140px;font-size:14px;line-height:18px;font-weight:bold;color:#1f55a6;text-align:center;white-space:nowrap;">希望休</div>
<div class="ab" style="left:427.25px;top:795.5px;width:140px;font-size:14px;line-height:18px;font-weight:bold;color:#111;text-align:center;white-space:nowrap">未提出</div>
<div class="ab" style="left:565.75px;top:776.7px;width:140px;font-size:14px;line-height:18px;font-weight:bold;color:#1f55a6;text-align:center;white-space:nowrap;">希望休</div>
<div class="ab" style="left:565.75px;top:795.5px;width:140px;font-size:14px;line-height:18px;font-weight:bold;color:#111;text-align:center;white-space:nowrap">未提出</div>
<div class="ab" style="left:704.25px;top:776.7px;width:140px;font-size:14px;line-height:18px;font-weight:bold;color:#1f55a6;text-align:center;white-space:nowrap;">希望休</div>
<div class="ab" style="left:704.25px;top:795.5px;width:140px;font-size:14px;line-height:18px;font-weight:bold;color:#111;text-align:center;white-space:nowrap">未提出</div>
<div class="ab" style="left:842.75px;top:776.7px;width:140px;font-size:14px;line-height:18px;font-weight:bold;color:#1f55a6;text-align:center;white-space:nowrap;letter-spacing:1.2px;font-size:14px;">10:00 - 13:30</div>
<div class="ab" style="left:842.75px;top:795.5px;width:140px;font-size:14px;line-height:18px;font-weight:bold;color:#111;text-align:center;white-space:nowrap">未提出</div>
<div class="ab" style="left:981.25px;top:776.7px;width:140px;font-size:14px;line-height:18px;font-weight:bold;color:#1f55a6;text-align:center;white-space:nowrap;">希望休</div>
<div class="ab" style="left:981.25px;top:795.5px;width:140px;font-size:14px;line-height:18px;font-weight:bold;color:#111;text-align:center;white-space:nowrap">未提出</div>
<div class="ab" style="left:1119.75px;top:776.7px;width:140px;font-size:14px;line-height:18px;font-weight:bold;color:#1f55a6;text-align:center;white-space:nowrap;">希望休</div>
<div class="ab" style="left:1119.75px;top:795.5px;width:140px;font-size:14px;line-height:18px;font-weight:bold;color:#111;text-align:center;white-space:nowrap">未提出</div>
<div class="ab" style="left:1258.25px;top:776.7px;width:140px;font-size:14px;line-height:18px;font-weight:bold;color:#1f55a6;text-align:center;white-space:nowrap;">希望休</div>
<div class="ab" style="left:1258.25px;top:795.5px;width:140px;font-size:14px;line-height:18px;font-weight:bold;color:#111;text-align:center;white-space:nowrap">未提出</div>
<div class="ab" style="left:1396.75px;top:776.7px;width:140px;font-size:14px;line-height:18px;font-weight:bold;color:#1f55a6;text-align:center;white-space:nowrap;">希望休</div>
<div class="ab" style="left:1396.75px;top:795.5px;width:140px;font-size:14px;line-height:18px;font-weight:bold;color:#111;text-align:center;white-space:nowrap">未提出</div>
<svg class="ab" style="left:11px;top:842.5px" width="30" height="32" viewBox="0 0 30 32"><rect x="1" y="1.1" width="27.2" height="2.3" rx="1.1" fill="#959595"/><rect x="1" y="9.1" width="27.2" height="2.3" rx="1.1" fill="#959595"/><rect x="1" y="17.1" width="27.2" height="2.3" rx="1.1" fill="#959595"/><rect x="1" y="25.1" width="27.2" height="2.3" rx="1.1" fill="#959595"/></svg>
<div class="ab" style="left:288.75px;top:839.2px;width:140px;font-size:14px;line-height:18px;font-weight:bold;color:#1f55a6;text-align:center;white-space:nowrap;">希望休</div>
<div class="ab" style="left:288.75px;top:858px;width:140px;font-size:14px;line-height:18px;font-weight:bold;color:#111;text-align:center;white-space:nowrap">未提出</div>
<div class="ab" style="left:427.25px;top:839.2px;width:140px;font-size:14px;line-height:18px;font-weight:bold;color:#1f55a6;text-align:center;white-space:nowrap;">希望休</div>
<div class="ab" style="left:427.25px;top:858px;width:140px;font-size:14px;line-height:18px;font-weight:bold;color:#111;text-align:center;white-space:nowrap">未提出</div>
<div class="ab" style="left:565.75px;top:839.2px;width:140px;font-size:14px;line-height:18px;font-weight:bold;color:#1f55a6;text-align:center;white-space:nowrap;">希望休</div>
<div class="ab" style="left:565.75px;top:858px;width:140px;font-size:14px;line-height:18px;font-weight:bold;color:#111;text-align:center;white-space:nowrap">未提出</div>
<div class="ab" style="left:704.25px;top:839.2px;width:140px;font-size:14px;line-height:18px;font-weight:bold;color:#1f55a6;text-align:center;white-space:nowrap;">希望休</div>
<div class="ab" style="left:704.25px;top:858px;width:140px;font-size:14px;line-height:18px;font-weight:bold;color:#111;text-align:center;white-space:nowrap">未提出</div>
<div class="ab" style="left:842.75px;top:839.2px;width:140px;font-size:14px;line-height:18px;font-weight:bold;color:#1f55a6;text-align:center;white-space:nowrap;">希望休</div>
<div class="ab" style="left:842.75px;top:858px;width:140px;font-size:14px;line-height:18px;font-weight:bold;color:#111;text-align:center;white-space:nowrap">未提出</div>
<div class="ab" style="left:981.25px;top:839.2px;width:140px;font-size:14px;line-height:18px;font-weight:bold;color:#1f55a6;text-align:center;white-space:nowrap;">希望休</div>
<div class="ab" style="left:981.25px;top:858px;width:140px;font-size:14px;line-height:18px;font-weight:bold;color:#111;text-align:center;white-space:nowrap">未提出</div>
<div class="ab" style="left:1119.75px;top:839.2px;width:140px;font-size:14px;line-height:18px;font-weight:bold;color:#1f55a6;text-align:center;white-space:nowrap;">希望休</div>
<div class="ab" style="left:1119.75px;top:858px;width:140px;font-size:14px;line-height:18px;font-weight:bold;color:#111;text-align:center;white-space:nowrap">未提出</div>
<div class="ab" style="left:1258.25px;top:839.2px;width:140px;font-size:14px;line-height:18px;font-weight:bold;color:#1f55a6;text-align:center;white-space:nowrap;">希望休</div>
<div class="ab" style="left:1258.25px;top:858px;width:140px;font-size:14px;line-height:18px;font-weight:bold;color:#111;text-align:center;white-space:nowrap">未提出</div>
<div class="ab" style="left:1396.75px;top:839.2px;width:140px;font-size:14px;line-height:18px;font-weight:bold;color:#1f55a6;text-align:center;white-space:nowrap;">希望休</div>
<div class="ab" style="left:1396.75px;top:858px;width:140px;font-size:14px;line-height:18px;font-weight:bold;color:#111;text-align:center;white-space:nowrap">未提出</div>
</div>
<div class="ab" style="left:1893px;top:237px;width:23px;height:846px;background:#f1f1f1"></div>
<div class="ab" style="left:1894px;top:261px;width:21px;height:303px;background:#c1c1c1"></div>
<div class="ab" style="left:1899px;top:247px;width:0;height:0;border-left:5.5px solid transparent;border-right:5.5px solid transparent;border-bottom:6px solid #a3a3a3"></div>
<div class="ab" style="left:1898px;top:1067px;width:0;height:0;border-left:6px solid transparent;border-right:6px solid transparent;border-top:6px solid #3c3c3c"></div>
<div class="ab" style="left:407px;top:1083px;width:1486px;height:22px;background:#f1f1f1"></div>
<div class="ab" style="left:430px;top:1084px;width:467px;height:21px;background:#c1c1c1"></div>
<div class="ab" style="left:415px;top:1089px;width:0;height:0;border-top:5.5px solid transparent;border-bottom:5.5px solid transparent;border-right:6px solid #a3a3a3"></div>
<div class="ab" style="left:1879px;top:1089px;width:0;height:0;border-top:5.5px solid transparent;border-bottom:5.5px solid transparent;border-left:6px solid #3c3c3c"></div>
<div class="ab" style="left:1893px;top:1083px;width:23px;height:22px;background:#dcdcdc"></div>
<div class="ab" style="left:270px;top:284px;width:560px;height:145px;background:#fff;border-radius:5px;border:1px solid #d8d8d8;box-shadow:0 4px 10px rgba(0,0,0,0.22);"></div>
<div class="ab" style="left:539px;top:428px;width:0;height:0;border-left:11px solid transparent;border-right:11px solid transparent;border-top:10px solid #fff;filter:drop-shadow(0 2px 2px rgba(0,0,0,0.18))"></div>
<div class="t" style="left:293px;top:311.5px;font-size:19px;letter-spacing:0.4px;color:#333">各数値をクリックし、必要労働時間を調整します。</div>
<div class="t" style="left:293px;top:351.5px;font-size:19px;letter-spacing:0.4px;color:#333">※初期段階では「適正シフト管理」の「曜日マスター」が</div>
<div class="t" style="left:293px;top:381.5px;font-size:19px;letter-spacing:0.4px;color:#333">反映されています。</div>
<div class="ab" style="left:1390px;top:61px;width:454px;height:75px;background:#fff;border-radius:5px;border:1px solid #d8d8d8;box-shadow:0 4px 10px rgba(0,0,0,0.22);"></div>
<div class="ab" style="left:1607px;top:135px;width:0;height:0;border-left:11px solid transparent;border-right:11px solid transparent;border-top:10px solid #fff;filter:drop-shadow(0 2px 2px rgba(0,0,0,0.18))"></div>
<div class="t" style="left:1413px;top:87.5px;font-size:19px;letter-spacing:0.4px;color:#333">編集ボタンのクリック後、「確定」できます</div>
<svg class="ab" style="left:1826px;top:67px" width="13" height="12" viewBox="0 0 13 12"><path d="M1 0.5L12 11.5M12 0.5L1 11.5" stroke="#2a2a2a" stroke-width="1.8"/></svg>
</body></html>
